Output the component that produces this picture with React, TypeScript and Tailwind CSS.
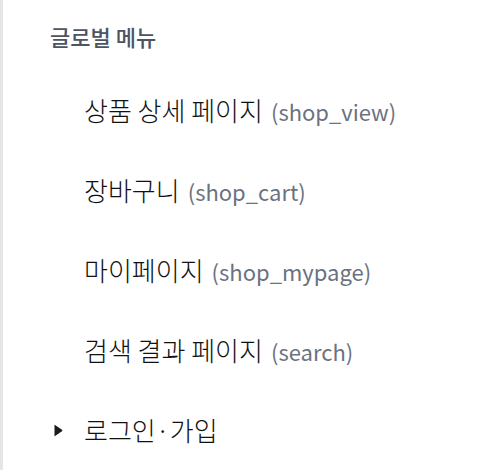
import React from "react";

const items = [
    { label: "상품 상세 페이지", code: "shop_view" },
    { label: "장바구니", code: "shop_cart" },
    { label: "마이페이지", code: "shop_mypage" },
    { label: "검색 결과 페이지", code: "search" },
];

const App: React.FC = () => {
    return (
        <div
            className="w-[500px] h-[470px] bg-white border-l-[3px] border-[#e5e5e5] overflow-hidden"
            style={{ fontFamily: '"Noto Sans CJK KR", "Noto Sans", sans-serif' }}
        >
            <div className="pl-[47px] pt-[22px]">
                <h2 className="text-[22px] font-medium text-[#4b5563] leading-[28px]">
                    글로벌 메뉴
                </h2>
                <ul className="mt-[44px] flex flex-col gap-[48px]">
                    {items.map((item) => (
                        <li key={item.code} className="pl-[34px] flex items-baseline h-[32px]">
                            <span className="text-[26px] font-light text-[#111111] leading-[32px]">
                                {item.label}
                            </span>
                            <span className="ml-[8px] text-[22px] text-[#6b7280]">
                                ({item.code})
                            </span>
                        </li>
                    ))}
                    <li className="flex items-center h-[32px]">
                        <span className="w-[34px] flex">
                            <svg width="10" height="13" viewBox="0 0 10 13" className="ml-[3px]">
                                <path d="M1.5 1.5 Q1 0.5 2 1 L9 5.8 Q9.8 6.5 9 7.2 L2 12 Q1 12.5 1.5 11.5 Z" fill="#1a1a1a" />
                            </svg>
                        </span>
                        <span className="text-[26px] font-light text-[#111111] leading-[32px]">
                            로그인·가입
                        </span>
                    </li>
                </ul>
            </div>
        </div>
    );
};

export default App;
